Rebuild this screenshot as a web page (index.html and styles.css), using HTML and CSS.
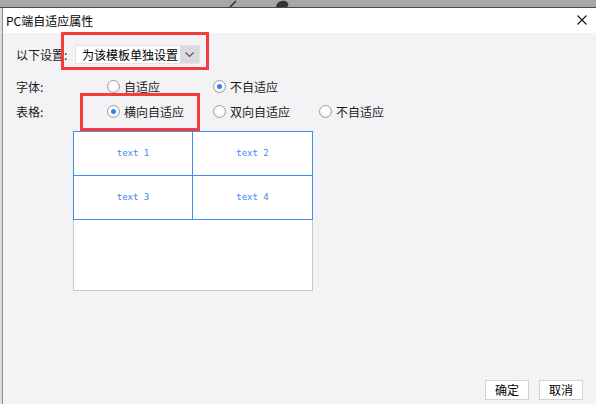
FILE: index.html
```html
<!DOCTYPE html>
<html>
<head>
<meta charset="utf-8">
<link rel="stylesheet" href="styles.css">
</head>
<body>
<div class="window">
  <div class="top-strip">
    <svg class="strip-art" width="596" height="7" viewBox="0 0 596 7"><path d="M230 7 L236 1" stroke="#333" stroke-width="1.6"/><path d="M276 7 C277 2 281 0 285 1 C289 2 289 6 287 7 Z" fill="#333"/></svg>
  </div>
  <div class="frame">
    <div class="edge"></div>
    <div class="dialog">
      <div class="titlebar">
        <span class="title">PC端自适应属性</span>
        <svg class="close" width="10" height="10" viewBox="0 0 10 10"><path d="M0.5 0.5 L9.5 9.5 M9.5 0.5 L0.5 9.5" stroke="#111" stroke-width="1.1"/></svg>
      </div>
      <div class="content">
        <div class="row row-setting">
          <span class="label-short">以下设置:</span>
          <div class="select">
            <span class="select-text">为该模板单独设置</span>
            <span class="select-btn"><svg width="9" height="5" viewBox="0 0 9 5"><path d="M0.5 0.5 L4.5 4.5 L8.5 0.5" fill="none" stroke="#555" stroke-width="1.1"/></svg></span>
          </div>
        </div>
        <div class="row row-font">
          <span class="label">字体:</span>
          <label class="opt"><span class="radio"></span>自适应</label>
          <label class="opt"><span class="radio checked"></span>不自适应</label>
        </div>
        <div class="row row-table">
          <span class="label">表格:</span>
          <label class="opt"><span class="radio checked"></span>横向自适应</label>
          <label class="opt"><span class="radio"></span>双向自适应</label>
          <label class="opt"><span class="radio"></span>不自适应</label>
        </div>
        <div class="preview">
          <div class="grid">
            <div class="cell">text 1</div>
            <div class="cell">text 2</div>
            <div class="cell">text 3</div>
            <div class="cell">text 4</div>
          </div>
          <div class="blank"></div>
        </div>
      </div>
      <div class="footer">
        <button class="btn">确定</button>
        <button class="btn">取消</button>
      </div>
      <div class="mark mark-1"></div>
      <div class="mark mark-2"></div>
    </div>
  </div>
</div>
</body>
</html>
```

FILE: styles.css
```css
* { box-sizing: border-box; }
html, body { margin: 0; padding: 0; }
body {
  width: 596px;
  height: 404px;
  overflow: hidden;
  font-family: "Noto Sans CJK SC", "Noto Sans", sans-serif;
  font-size: 12px;
  color: #1a1a1a;
}
.window {
  width: 596px;
  height: 404px;
  display: flex;
  flex-direction: column;
}
.top-strip {
  height: 8px;
  background: #a7a7a7;
  border-bottom: 1px solid #4a4a4a;
  position: relative;
}
.strip-art { position: absolute; left: 0; top: 0; }
.frame {
  flex: 1;
  display: flex;
}
.edge {
  width: 3px;
  background: #dcdcdc;
  border-right: 1px solid #8c8c8c;
}
.dialog {
  flex: 1;
  display: flex;
  flex-direction: column;
  position: relative;
  background: #f3f3f6;
}
.titlebar {
  height: 25px;
  background: #ffffff;
  display: flex;
  align-items: center;
  justify-content: space-between;
  padding: 0 9px 0 3px;
}
.title {
  font-size: 12px;
  line-height: 14px;
  color: #000;
}
.close { display: block; margin-top: -1px; }
.content {
  padding: 12px 0 0 13px;
  display: flex;
  flex-direction: column;
}
.row {
  display: flex;
  align-items: center;
  height: 20px;
}
.row-setting { height: 19px; }
.row-font { margin-top: 12px; }
.row-table { margin-top: 5px; }
.label-short { width: 59px; }
.label { width: 91px; }
.select {
  display: flex;
  height: 19px;
  width: 125px;
  background: #fff;
  border: 1px solid #e4e4e8;
}
.select-text {
  flex: 1;
  padding-left: 6px;
  line-height: 17px;
  color: #000;
}
.select-btn {
  width: 19px;
  background: #d9d9de;
  display: flex;
  align-items: center;
  justify-content: center;
}
.select-btn svg { display: block; }
.opt {
  width: 106px;
  display: flex;
  align-items: center;
  gap: 4px;
  color: #1a1a1a;
}
.radio {
  width: 13px;
  height: 13px;
  border-radius: 50%;
  border: 1px solid #9e9e9e;
  background: radial-gradient(circle at 50% 40%, #ffffff 40%, #e6e6e6 100%);
  display: flex;
  align-items: center;
  justify-content: center;
}
.radio.checked::after {
  content: "";
  width: 5px;
  height: 5px;
  border-radius: 50%;
  background: #2f80f0;
}
.preview {
  margin: 10px 0 0 57px;
  width: 240px;
}
.grid {
  display: grid;
  grid-template-columns: 118px 119px;
  grid-template-rows: 43px 43px;
  gap: 1px;
  background: #3f8ff2;
  border: 1px solid #3f8ff2;
}
.cell {
  background: #fff;
  display: flex;
  align-items: center;
  justify-content: center;
  font-family: "DejaVu Sans Mono", "Liberation Mono", monospace;
  font-size: 9px;
  color: #3a8af0;
  padding-bottom: 1px;
}
.blank {
  height: 71px;
  background: #fff;
  border: 1px solid #c9c9c9;
  border-top: none;
}
.footer {
  margin-top: auto;
  display: flex;
  justify-content: flex-end;
  gap: 10px;
  padding: 0 13px 4px 0;
}
.btn {
  width: 44px;
  height: 20px;
  padding: 0;
  background: #fff;
  border: 1px solid #d2d2d6;
  font-family: "Noto Sans CJK SC", sans-serif;
  font-size: 12px;
  color: #000;
  line-height: 16px;
}
.mark {
  position: absolute;
  border: 3px solid #f53b3b;
}
.mark-1 { left: 58px; top: 24px; width: 148px; height: 38px; }
.mark-2 { left: 77px; top: 85px; width: 120px; height: 38px; }
```
